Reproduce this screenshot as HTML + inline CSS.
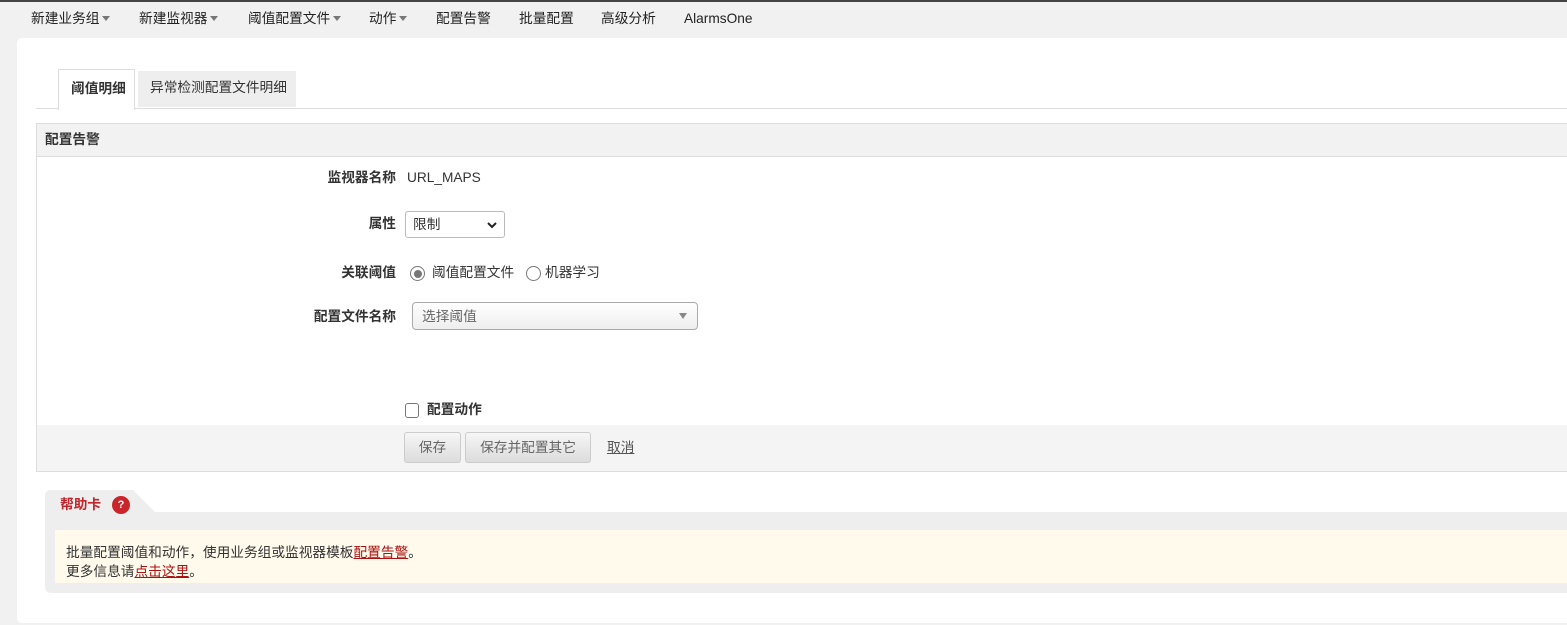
<!DOCTYPE html>
<html><head><meta charset="utf-8"><style>
*{margin:0;padding:0;box-sizing:border-box}
body{width:1567px;height:625px;overflow:hidden;background:#f1f1f1;font-family:"Liberation Sans","Noto Sans CJK SC",sans-serif;font-size:13.7px;color:#333;position:relative;line-height:16px}
.a{position:absolute;white-space:nowrap}
.nav span{position:absolute;top:11px;color:#222}
.car{display:inline-block;width:0;height:0;border-left:4px solid transparent;border-right:4px solid transparent;border-top:5px solid #777;margin-left:3px;vertical-align:2px}
.lbl{position:absolute;right:1171px;font-weight:bold;color:#333}
.btn{position:absolute;top:432px;height:31px;border:1px solid #ccc;border-radius:3px;background:linear-gradient(#f6f6f6,#dcdcdc);color:#666;text-align:center;line-height:29px}
</style></head><body>
<div class="a" style="left:0;top:0;width:1567px;height:2px;background:#444"></div>
<div class="nav">
<span style="left:31px">新建业务组<i class="car"></i></span>
<span style="left:139px">新建监视器<i class="car"></i></span>
<span style="left:248px">阈值配置文件<i class="car"></i></span>
<span style="left:369px">动作<i class="car"></i></span>
<span style="left:436px">配置告警</span>
<span style="left:519px">批量配置</span>
<span style="left:601px">高级分析</span>
<span style="left:684px">AlarmsOne</span>
</div>
<div class="a" style="left:17px;top:38px;width:1560px;height:585px;background:#fff;border-radius:5px"></div>
<div class="a" style="left:36px;top:108px;width:1531px;height:1px;background:#ddd"></div>
<div class="a" style="left:58px;top:69px;width:77px;height:41px;background:#fff;border:1px solid #ddd;border-bottom:none;font-weight:bold;padding:11px 0 0 12px">阈值明细</div>
<div class="a" style="left:138px;top:71px;width:158px;height:36px;background:#eee;padding:9px 0 0 12px">异常检测配置文件明细</div>
<div class="a" style="left:36px;top:123px;width:1540px;height:349px;border:1px solid #ddd;background:#fff"></div>
<div class="a" style="left:37px;top:124px;width:1530px;height:33px;background:#f2f2f2;border-bottom:1px solid #ddd;font-weight:bold;padding:8px 0 0 8px">配置告警</div>
<div class="lbl" style="top:170px">监视器名称</div>
<div class="a" style="left:407px;top:170px">URL_MAPS</div>
<div class="lbl" style="top:216px">属性</div>
<div class="a" style="left:405px;top:211px;width:100px;height:27px;border:1px solid #bbb;border-radius:3px;padding:5px 0 0 7px">限制<svg style="position:absolute;right:7px;top:10px" width="10" height="7"><path d="M1 1L5 5L9 1" stroke="#222" stroke-width="2" fill="none"/></svg></div>
<div class="lbl" style="top:265px">关联阈值</div>
<div class="a" style="left:410px;top:266px;width:15px;height:15px;border:1px solid #777;border-radius:50%"><div style="margin:2.5px;width:8px;height:8px;border-radius:50%;background:#777"></div></div>
<div class="a" style="left:432px;top:265px">阈值配置文件</div>
<div class="a" style="left:526px;top:266px;width:15px;height:15px;border:1px solid #777;border-radius:50%"></div>
<div class="a" style="left:545px;top:265px">机器学习</div>
<div class="lbl" style="top:309px">配置文件名称</div>
<div class="a" style="left:412px;top:302px;width:286px;height:28px;border:1px solid #aaa;border-radius:4px;background:linear-gradient(#fff,#eee);color:#666;padding:6px 0 0 9px">选择阈值<span style="position:absolute;right:10px;top:10px;border-left:4px solid transparent;border-right:4px solid transparent;border-top:6px solid #888"></span></div>
<div class="a" style="left:405px;top:403px;width:14px;height:15px;border:1px solid #777;border-radius:3px"></div>
<div class="a" style="left:427px;top:402px;font-weight:bold">配置动作</div>
<div class="a" style="left:37px;top:425px;width:1530px;height:46px;background:#f4f4f4"></div>
<div class="btn" style="left:404px;width:57px">保存</div>
<div class="btn" style="left:465px;width:126px">保存并配置其它</div>
<div class="a" style="left:607px;top:440px;color:#555;text-decoration:underline">取消</div>
<svg class="a" style="left:45px;top:490px" width="115" height="24"><path d="M0 24V6Q0 0 6 0H88L110 22V24Z" fill="#eee"/></svg>
<div class="a" style="left:45px;top:512px;width:1530px;height:81px;background:#eee;border-radius:0 0 0 6px"></div>
<div class="a" style="left:60px;top:497px;color:#c0272d;font-weight:bold">帮助卡</div>
<div class="a" style="left:112px;top:496px;width:18px;height:18px;border-radius:50%;background:#c9262b;color:#fff;font-size:11px;font-weight:bold;text-align:center;line-height:18px">?</div>
<div class="a" style="left:55px;top:530px;width:1520px;height:53px;background:#fffaeb;padding:13px 0 0 11px;line-height:19px">批量配置阈值和动作，使用业务组或监视器模板<u style="color:#a11">配置告警</u>。<br>更多信息请<u style="color:#a11">点击这里</u>。</div>
</body></html>
